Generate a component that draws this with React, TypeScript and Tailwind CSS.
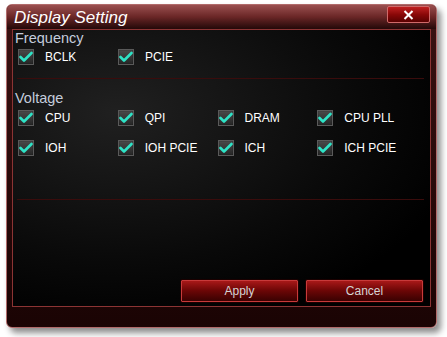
import React from "react";

const font = { fontFamily: '"Liberation Sans", Arial, sans-serif' };

function Check({ label }: { label: string }) {
  return (
    <div className="flex items-center w-[100px] h-[16px]">
      <div className="w-[16px] h-[16px] border border-[#5a5a5a] bg-gradient-to-b from-[#4a4a4a] to-[#262626] flex items-center justify-center shadow-[inset_0_0_1px_#000]">
        <svg width="14" height="12" viewBox="0 0 14 12">
          <path d="M1.5 6 L5 9.5 L12.5 2" fill="none" stroke="#2fe3c6" strokeWidth="2.6" strokeLinecap="round" strokeLinejoin="round" />
        </svg>
      </div>
      <span className="ml-[11px] text-[12px] text-white leading-none">{label}</span>
    </div>
  );
}

function Btn({ label }: { label: string }) {
  return (
    <div className="w-[117px] h-[22px] border border-[#c83a3a] rounded-[1px] bg-gradient-to-b from-[#a81818] via-[#6a0606] to-[#3a0202] flex items-center justify-center text-[12px] text-[#d4d4d4] shadow-[0_0_0_1px_#1a0000]">
      {label}
    </div>
  );
}

export default function App() {
  return (
    <div className="w-[447px] h-[337px] bg-white overflow-hidden pt-[4px] pl-[6px]" style={font}>
      <div className="w-[431px] h-[324px] rounded-[6px] border border-[#b06a6a] bg-gradient-to-b from-[#3a1212] to-[#1a0404] shadow-[4px_5px_6px_rgba(0,0,0,0.45)] flex flex-col">
        <div className="h-[24px] relative rounded-t-[5px] bg-gradient-to-b from-[#9a5050] via-[#6a2626] to-[#240909] flex items-center pl-[7px]">
          <span className="italic text-[17px] text-white leading-none mt-[1px]">Display Setting</span>
          <div className="absolute right-[6px] top-[1px] w-[43px] h-[17px] border border-[#d06a6a] rounded-[2px] bg-gradient-to-b from-[#c02020] via-[#8a0808] to-[#5a0202] flex items-center justify-center">
            <svg width="11" height="10" viewBox="0 0 11 10">
              <path d="M1.5 1 L9.5 9 M9.5 1 L1.5 9" stroke="#ffffff" strokeWidth="2" />
            </svg>
          </div>
        </div>
        <div className="mx-[5px] h-[278px] border border-[#8c3434] bg-[radial-gradient(ellipse_at_25%_30%,#202020_0%,#090909_55%,#000_80%)] flex flex-col px-[4px]">
          <div className="text-[14.5px] text-[#c4ccdc] leading-[16px] -ml-[2px]">Frequency</div>
          <div className="flex mt-[3px] pl-[1px]">
            <Check label="BCLK" />
            <Check label="PCIE" />
          </div>
          <div className="h-px bg-[#3a0c0c] mt-[13px] mr-[2px]" />
          <div className="text-[14.5px] text-[#c4ccdc] mt-[11px] leading-[16px] -ml-[2px]">Voltage</div>
          <div className="grid grid-cols-4 w-[400px] gap-y-[14px] mt-[4px] pl-[1px]">
            <Check label="CPU" />
            <Check label="QPI" />
            <Check label="DRAM" />
            <Check label="CPU PLL" />
            <Check label="IOH" />
            <Check label="IOH PCIE" />
            <Check label="ICH" />
            <Check label="ICH PCIE" />
          </div>
          <div className="h-px bg-[#3a0c0c] mt-[43px] mr-[2px]" />
          <div className="flex-1" />
          <div className="flex justify-end gap-[8px] mb-[4px] mr-[3px]">
            <Btn label="Apply" />
            <Btn label="Cancel" />
          </div>
        </div>
        <div className="flex-1" />
      </div>
    </div>
  );
}
